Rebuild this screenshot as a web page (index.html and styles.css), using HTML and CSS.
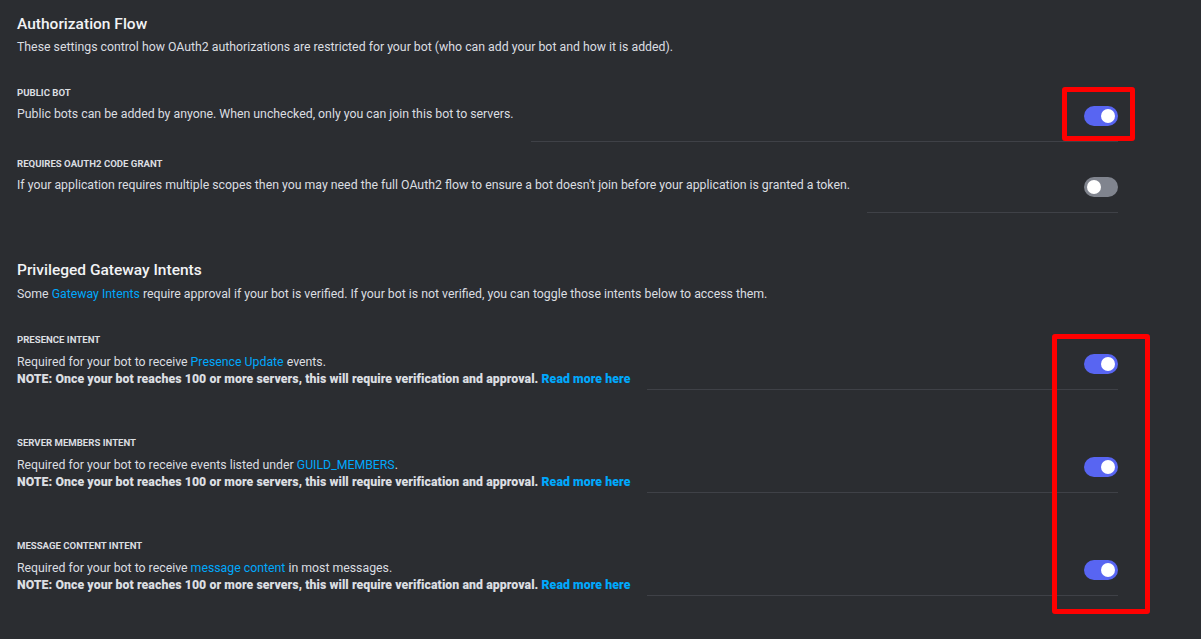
FILE: index.html
```html
<!DOCTYPE html>
<html>
<head>
<meta charset="utf-8">
<link rel="stylesheet" href="styles.css">
</head>
<body>
<div class="page">
  <section class="section auth">
    <h2 class="title">Authorization Flow</h2>
    <p class="subtitle">These settings control how OAuth2 authorizations are restricted for your bot (who can add your bot and how it is added).</p>

    <div class="row first">
      <div class="text">
        <div class="label">PUBLIC BOT</div>
        <div class="desc">Public bots can be added by anyone. When unchecked, only you can join this bot to servers.</div>
      </div>
      <div class="side"><span class="switch on"><span class="knob"></span></span></div>
    </div>

    <div class="row">
      <div class="text">
        <div class="label">REQUIRES OAUTH2 CODE GRANT</div>
        <div class="desc">If your application requires multiple scopes then you may need the full OAuth2 flow to ensure a bot doesn't join before your application is granted a token.</div>
      </div>
      <div class="side"><span class="switch"><span class="knob"></span></span></div>
    </div>
  </section>

  <section class="section intents">
    <h2 class="title">Privileged Gateway Intents</h2>
    <p class="subtitle">Some <a class="link">Gateway Intents</a> require approval if your bot is verified. If your bot is not verified, you can toggle those intents below to access them.</p>

    <div class="row first">
      <div class="text">
        <div class="label">PRESENCE INTENT</div>
        <div class="desc">Required for your bot to receive <a class="link">Presence Update</a> events.<br><strong class="note">NOTE: Once your bot reaches 100 or more servers, this will require verification and approval. <a class="link">Read more here</a></strong></div>
      </div>
      <div class="side"><span class="switch on"><span class="knob"></span></span></div>
    </div>

    <div class="row">
      <div class="text">
        <div class="label">SERVER MEMBERS INTENT</div>
        <div class="desc">Required for your bot to receive events listed under <a class="link">GUILD_MEMBERS</a>.<br><strong class="note">NOTE: Once your bot reaches 100 or more servers, this will require verification and approval. <a class="link">Read more here</a></strong></div>
      </div>
      <div class="side"><span class="switch on"><span class="knob"></span></span></div>
    </div>

    <div class="row">
      <div class="text">
        <div class="label">MESSAGE CONTENT INTENT</div>
        <div class="desc">Required for your bot to receive <a class="link">message content</a> in most messages.<br><strong class="note">NOTE: Once your bot reaches 100 or more servers, this will require verification and approval. <a class="link">Read more here</a></strong></div>
      </div>
      <div class="side"><span class="switch on"><span class="knob"></span></span></div>
    </div>
  </section>

  <div class="mark mark-one"></div>
  <div class="mark mark-two"></div>
</div>
</body>
</html>
```

FILE: styles.css
```css
* { box-sizing: border-box; }
html, body {
  margin: 0;
  padding: 0;
  background: #2b2d31;
}
body {
  width: 1201px;
  height: 639px;
  overflow: hidden;
  font-family: Roboto, "Noto Sans", sans-serif;
  color: #dbdee1;
}
.page {
  position: relative;
  padding: 14px 83px 0 17px;
}
.title {
  margin: 0;
  font-size: 15.5px;
  line-height: 20px;
  font-weight: 500;
  color: #f2f3f5;
}
.subtitle {
  margin: 4px 0 0;
  font-size: 12.3px;
  line-height: 18px;
  color: #dbdee1;
}
.intents .subtitle { margin-top: 5px; }
.link {
  color: #00a8fc;
  text-decoration: none;
}
.row {
  display: flex;
  align-items: stretch;
  margin-top: 15px;
}
.auth .row.first { margin-top: 30px; }
.intents { margin-top: 47px; }
.intents .row { margin-top: 46px; }
.intents .row.first { margin-top: 30px; }
.text {
  flex: none;
  padding-bottom: 19px;
}
.intents .text { padding-bottom: 2px; }
.label {
  font-size: 9.6px;
  line-height: 14px;
  font-weight: 700;
  color: #dbdee1;
}
.desc {
  margin-top: 5px;
  font-size: 12.3px;
  line-height: 18px;
}
.intents .desc {
  margin-top: 7px;
  line-height: 17px;
}
.note {
  font-weight: 900;
  letter-spacing: 0.07px;
  color: #dbdee1;
}
.side {
  flex: 1;
  margin-left: 17px;
  border-bottom: 1px solid #3f4147;
  display: flex;
  justify-content: flex-end;
  align-items: flex-end;
  padding-bottom: 15px;
}
.intents .side { padding-bottom: 15px; }
.switch {
  position: relative;
  display: block;
  width: 34px;
  height: 20px;
  border-radius: 10px;
  background: #80848e;
}
.switch.on { background: #5865f2; }
.knob {
  position: absolute;
  top: 3px;
  left: 3px;
  width: 14px;
  height: 14px;
  border-radius: 50%;
  background: #ffffff;
}
.switch.on .knob { left: 17px; }
.mark {
  position: absolute;
  border: 5px solid #ff0000;
  border-radius: 3px;
}
.mark-one {
  left: 1062px;
  top: 87px;
  width: 73px;
  height: 54px;
}
.mark-two {
  left: 1052px;
  top: 334px;
  width: 98px;
  height: 280px;
}
```
